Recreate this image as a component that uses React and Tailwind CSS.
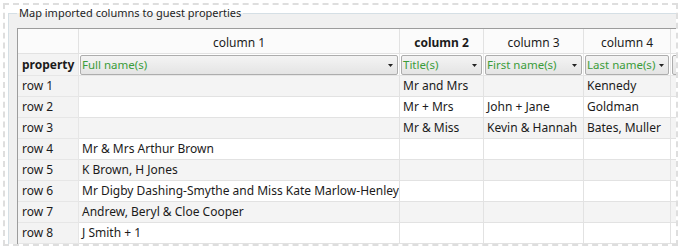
import React from "react";

// Column headers and the property chosen for each one
const columns = [
  { label: "column 1", bold: false, property: "Full name(s)" },
  { label: "column 2", bold: true, property: "Title(s)" },
  { label: "column 3", bold: false, property: "First name(s)" },
  { label: "column 4", bold: false, property: "Last name(s)" },
  { label: "", bold: false, property: "" },
];

const rows = [
  ["", "Mr and Mrs", "", "Kennedy", ""],
  ["", "Mr + Mrs", "John + Jane", "Goldman", ""],
  ["", "Mr & Miss", "Kevin & Hannah", "Bates, Muller", ""],
  ["Mr & Mrs Arthur Brown", "", "", "", ""],
  ["K Brown, H Jones", "", "", "", ""],
  ["Mr Digby Dashing-Smythe and Miss Kate Marlow-Henley", "", "", "", ""],
  ["Andrew, Beryl & Cloe Cooper", "", "", "", ""],
  ["J Smith + 1", "", "", "", ""],
];

const Arrow = () => (
  <svg width="5" height="3" viewBox="0 0 5 3" className="shrink-0">
    <path d="M0 0h5L2.5 3z" fill="#222" />
  </svg>
);

const Combo = ({ value }) => (
  <div className="h-[20px] mx-[1px] mt-[1px] flex items-center justify-between gap-[3px] pl-[1px] pr-[4px] border border-[#adadad] rounded-[2px] bg-gradient-to-b from-[#f4f4f4] to-[#e4e4e4] text-[11.5px] text-[#3a9c3a] whitespace-nowrap overflow-hidden">
    <span>{value}</span>
    <Arrow />
  </div>
);

export default function App() {
  return (
    <div className="w-[681px] h-[249px] bg-white p-[3px] font-['Noto_Sans','Open_Sans',sans-serif] text-[12px] leading-[16px] text-[#1b1b1b]">
      {/* torn-paper frame */}
      <div className="h-full border-2 border-dashed border-[#dedede] overflow-hidden">
        <fieldset className="ml-[3px] border-l border-t border-[#d5dfe5] bg-[#f0f0f0] pl-[8px] pt-[7px]">
          <legend className="ml-0 px-[2px] text-[11px] text-[#1e1e1e]">
            Map imported columns to guest properties
          </legend>

          <div className="grid grid-cols-[61px_321px_84px_100px_87px_60px] grid-rows-[25px_22px_repeat(8,21px)] border-l border-t border-[#9c9c9c] bg-white w-max">
            {/* header row */}
            <div className="bg-[#fbfbfb] border-r border-b border-[#e2e2e2]" />
            {columns.map((c, i) => (
              <div
                key={"h" + i}
                className={`bg-[#fbfbfb] border-r border-b border-[#e2e2e2] flex items-end justify-center pb-[2px] ${c.bold ? "font-bold" : ""}`}
              >
                {c.label}
              </div>
            ))}

            {/* property row */}
            <div className="bg-[#f3f3f3] border-r border-b border-[#e6e6e6] pl-[4px] flex items-center font-bold">
              property
            </div>
            {columns.map((c, i) => (
              <div key={"p" + i} className="border-r border-b border-[#e6e6e6]">
                <Combo value={c.property} />
              </div>
            ))}

            {/* data rows */}
            {rows.map((r, ri) => (
              <React.Fragment key={ri}>
                <div className="bg-[#f3f3f3] border-r border-b border-[#e6e6e6] pl-[4px] flex items-center">
                  row {ri + 1}
                </div>
                {r.map((v, ci) => (
                  <div
                    key={ci}
                    className={`${ri % 2 === 0 ? "bg-[#f4f4f4]" : "bg-white"} border-r border-b border-[#e2e2e2] pl-[3px] flex items-center whitespace-nowrap overflow-hidden`}
                  >
                    {v}
                  </div>
                ))}
              </React.Fragment>
            ))}
          </div>
        </fieldset>
      </div>
    </div>
  );
}
